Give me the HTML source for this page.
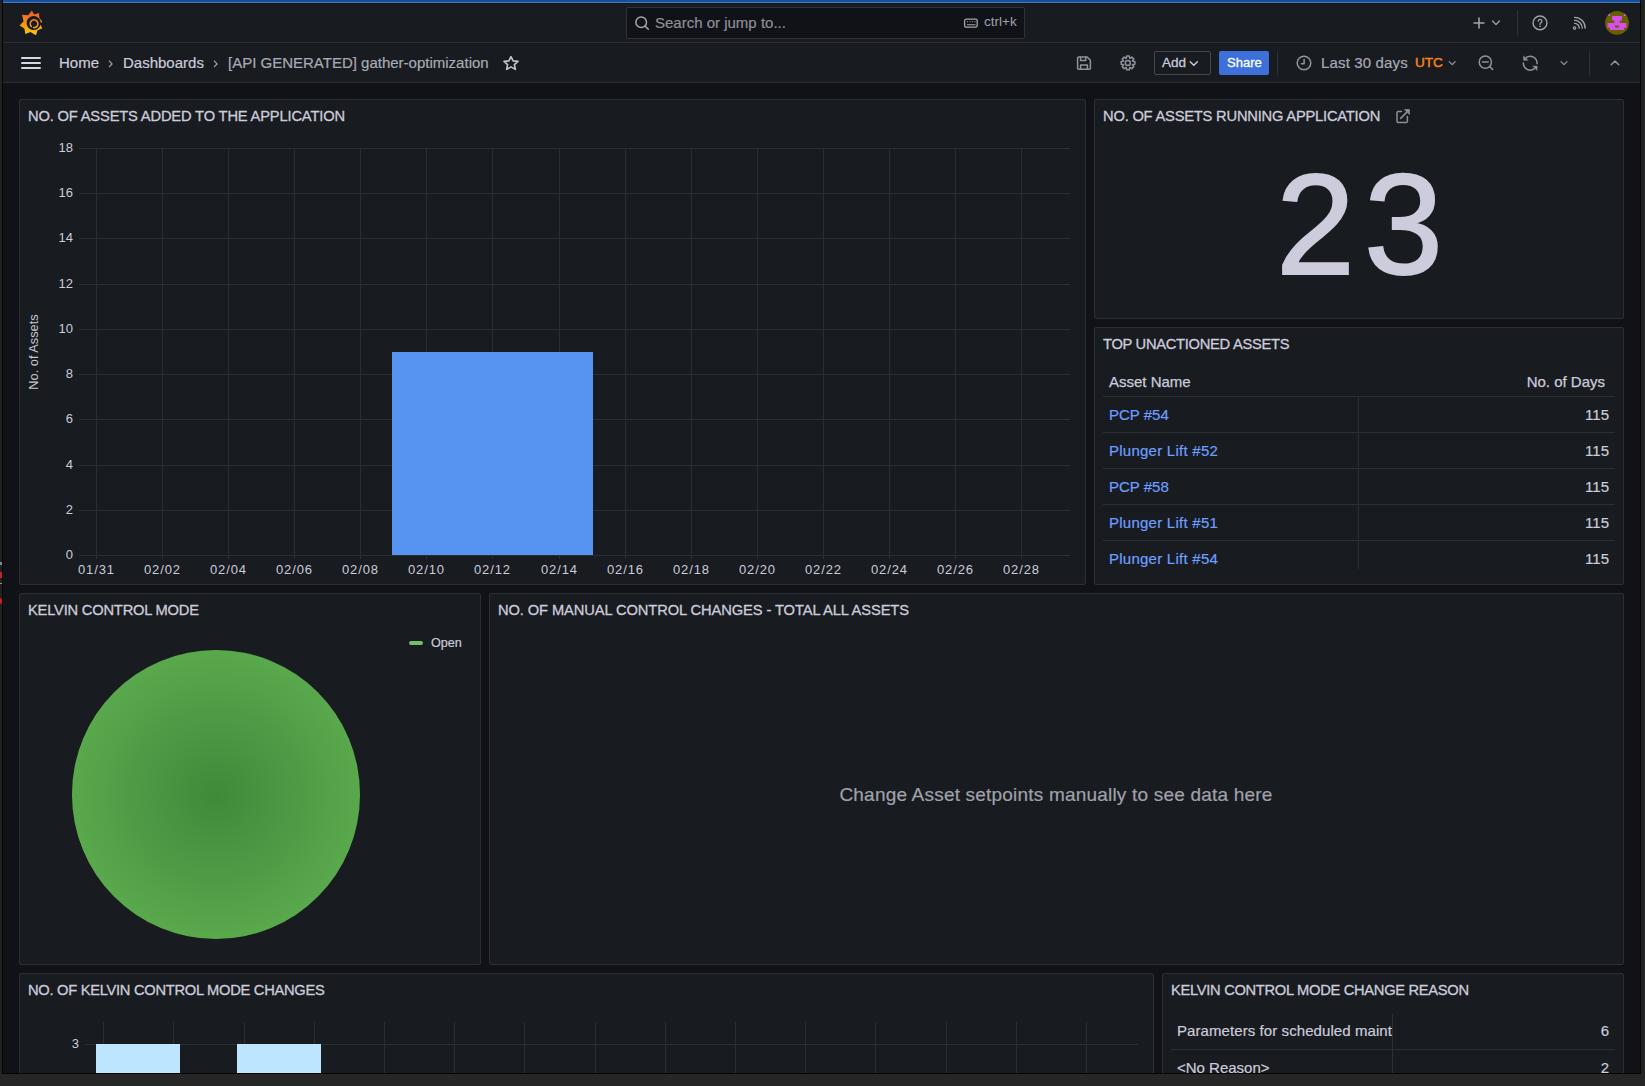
<!DOCTYPE html>
<html><head><meta charset="utf-8">
<style>
*{box-sizing:border-box;margin:0;padding:0}
html,body{width:1645px;height:1086px;overflow:hidden;background:#111217;font-family:"Liberation Sans",sans-serif;color:#ccccdc;position:relative}
.a{position:absolute}
.t{position:absolute;white-space:nowrap;line-height:1;-webkit-text-stroke-width:0.2px}
.panel{position:absolute;background:#181b1f;border:1px solid #2b2e34;border-radius:2px;overflow:hidden}
.pt{position:absolute;font-size:14.7px;letter-spacing:-0.12px;color:#ccccdc;white-space:nowrap;line-height:16px;-webkit-text-stroke:0.3px #ccccdc;margin-top:0.5px}
.gh{position:absolute;height:1px;background:#2a2d31}
.gv{position:absolute;width:1px;background:#2a2d31}
.yl{position:absolute;font-size:13px;color:#ccccdc;line-height:14px;text-align:right;width:40px}
.xl{position:absolute;font-size:13px;color:#ccccdc;line-height:14px;text-align:center;width:50px;letter-spacing:0.85px;text-indent:0.85px}
</style></head><body>
<!-- header -->
<div class="a" style="left:0;top:0;width:1645px;height:2px;background:#1450a0"></div>
<div class="a" style="left:0;top:2px;width:1645px;height:1px;background:#4a7ab8"></div>
<div class="a" style="left:0;top:3px;width:1645px;height:1px;background:#141414"></div>
<div class="a" style="left:0;top:4px;width:1645px;height:38px;background:#181b1f"></div>
<div class="a" style="left:0;top:42px;width:1645px;height:1px;background:#2b2e34"></div>
<div class="a" style="left:0;top:43px;width:1645px;height:39px;background:#181b1f"></div>
<div class="a" style="left:0;top:82px;width:1645px;height:1px;background:#2b2e34"></div>


<!-- LOGO -->
<svg class="a" style="left:0;top:0" width="60" height="45" viewBox="0 0 60 45">
 <defs><linearGradient id="lg" gradientUnits="userSpaceOnUse" x1="0" y1="11" x2="0" y2="35"><stop offset="0" stop-color="#f05a28"/><stop offset="1" stop-color="#fbca0a"/></linearGradient></defs>
 <polygon fill="url(#lg)" points="31.90,10.60 34.10,14.46 39.00,13.10 39.39,17.91 42.10,21.30 42.00,22.40 39.60,22.40 39.60,24.40 40.90,25.20 42.30,28.60 37.50,30.25 36.00,35.20 30.44,32.00 25.40,34.10 24.36,28.52 19.60,25.60 23.58,21.24 21.90,14.70 28.20,15.17"/>
 <path d="M40.6,22.2 A7,7 0 1 0 40.5,24.4" fill="#181b1f"/>
 <circle cx="33.8" cy="23.1" r="6.4" fill="#181b1f"/>
 <path d="M31.3,26.5 A3.9,3.9 0 1 1 33.6,27.6" fill="none" stroke="url(#lg)" stroke-width="1.5" stroke-linecap="round"/>
</svg>
<!-- SEARCH -->
<div class="a" style="left:626px;top:7px;width:399px;height:32px;background:#111217;border:1px solid #2f3136;border-radius:2px"></div>
<svg class="a" style="left:630px;top:12px" width="24" height="22" viewBox="0 0 24 22" fill="none" stroke="#a4a5af" stroke-width="1.5" stroke-linecap="round">
 <circle cx="11.2" cy="10.2" r="5.3"/><path d="M15.1,14.1 L18.3,17.3"/>
</svg>
<div class="t" style="left:655px;top:15px;font-size:15px;color:#8e8f9a;line-height:16px">Search or jump to...</div>
<svg class="a" style="left:960px;top:13px" width="22" height="20" viewBox="0 0 22 20" fill="none" stroke="#a4a5af" stroke-width="1.3">
 <rect x="4.6" y="6.2" width="12.6" height="8" rx="1.6"/>
 <path d="M7,8.7h1 M9.5,8.7h1 M12,8.7h1 M14.5,8.7h1 M7,11.7h8.5" stroke-width="1.1"/>
</svg>
<div class="t" style="left:984px;top:15px;font-size:13.5px;color:#9fa0aa;line-height:14px;-webkit-text-stroke-width:0">ctrl+k</div>
<!-- right icons -->
<svg class="a" style="left:1465px;top:8px" width="175" height="30" viewBox="1465 8 175 30" fill="none" stroke="#a2a3ad" stroke-width="1.6" stroke-linecap="round">
 <path d="M1474,23 H1484 M1479,18 V28"/>
 <path d="M1492.6,21 L1496,24.6 L1499.4,21" stroke-width="1.3"/>
 <path d="M1517.6,11 V35" stroke="#34363c" stroke-width="1"/>
 <circle cx="1540" cy="22.9" r="6.9" stroke-width="1.4"/>
 <path d="M1538.3,21.2 A1.8,1.8 0 1 1 1540.8,22.9 Q1540,23.3 1540,24.4" stroke-width="1.3"/>
 <circle cx="1540" cy="26.3" r="0.45" fill="#a2a3ad" stroke-width="0.7"/>
 <circle cx="1574.6" cy="28.1" r="1.2" stroke-width="1.2"/>
 <path d="M1574.6,23.4 A4.6,4.6 0 0 1 1579.2,28.2 M1574.6,20.4 A7.6,7.6 0 0 1 1582.2,28.2 M1574.6,17.4 A10.6,10.6 0 0 1 1585.2,28.2" stroke-width="1.3"/>
</svg>
<svg class="a" style="left:1604px;top:10px" width="26" height="26" viewBox="0 0 26 26">
 <defs><clipPath id="avc"><circle cx="13" cy="12.9" r="11.95"/></clipPath></defs>
 <circle cx="13" cy="12.9" r="11.95" fill="#676000"/>
 <g clip-path="url(#avc)" fill="#d84ee8">
  <rect x="3.8" y="3.5" width="2.2" height="2.5"/><rect x="20" y="3.5" width="2.2" height="2.5"/>
  <path d="M8.1,6 H17.9 V10.4 H15.7 V13 H22.4 V17.75 H20.1 V20.1 H6 V17.75 H3.5 V13 H10.4 V10.4 H8.1 Z"/>
 </g>
 <rect x="11" y="15.5" width="4" height="2.1" fill="#676000"/>
</svg>
<!-- TOOLBAR -->
<div class="a" style="left:21px;top:57px;width:20px;height:2px;background:#d6d6e4;border-radius:1px"></div>
<div class="a" style="left:21px;top:62px;width:20px;height:2px;background:#d6d6e4;border-radius:1px"></div>
<div class="a" style="left:21px;top:67px;width:20px;height:2px;background:#d6d6e4;border-radius:1px"></div>
<div class="t" style="left:59px;top:55px;font-size:15px;color:#ccccdc;line-height:16px">Home</div>
<svg class="a" style="left:104px;top:57.4px" width="14" height="14" viewBox="0 0 14 14" fill="none" stroke="#a4a5af" stroke-width="1.2"><path d="M5,3.6 L8,6.9 L5,10.2"/></svg>
<div class="t" style="left:123px;top:55px;font-size:15px;color:#ccccdc;line-height:16px">Dashboards</div>
<svg class="a" style="left:209px;top:57.4px" width="14" height="14" viewBox="0 0 14 14" fill="none" stroke="#a4a5af" stroke-width="1.2"><path d="M5,3.6 L8,6.9 L5,10.2"/></svg>
<div class="t" style="left:228px;top:55px;font-size:15px;color:#a9aab5;line-height:16px">[API GENERATED] gather-optimization</div>
<svg class="a" style="left:500px;top:52px" width="22" height="22" viewBox="0 0 22 22" fill="none" stroke="#c4c5cf" stroke-width="1.5" stroke-linejoin="round">
 <path d="M11,4.6 L13.1,8.9 L18,9.4 L14.4,12.6 L15.4,17.4 L11,14.9 L6.6,17.4 L7.6,12.6 L4,9.4 L8.9,8.9 Z" stroke-width="1.6"/>
</svg>
<!-- right toolbar -->
<svg class="a" style="left:1070px;top:50px" width="80" height="26" viewBox="1070 50 80 26" fill="none" stroke="#92939e" stroke-width="1.5" stroke-linejoin="round" stroke-linecap="round">
 <path d="M1078.6,57 H1087.2 L1090.4,60.2 V68.2 Q1090.4,69.2 1089.4,69.2 H1078.6 Q1077.6,69.2 1077.6,68.2 V58 Q1077.6,57 1078.6,57 Z"/>
 <path d="M1080.6,57.2 V60.6 H1085.8 V57.2 M1080.6,69 V65 H1087.4 V69"/>
 <circle cx="1127.8" cy="63" r="2.5"/>
 <path d="M1126.33,58.19 L1126.66,56.03 L1129.34,56.03 L1129.67,58.19 L1130.15,58.39 L1131.91,57.10 L1133.80,58.99 L1132.51,60.75 L1132.71,61.23 L1134.87,61.56 L1134.87,64.24 L1132.71,64.57 L1132.51,65.05 L1133.80,66.81 L1131.91,68.70 L1130.15,67.41 L1129.67,67.61 L1129.34,69.77 L1126.66,69.77 L1126.33,67.61 L1125.85,67.41 L1124.09,68.70 L1122.20,66.81 L1123.49,65.05 L1123.29,64.57 L1121.13,64.24 L1121.13,61.56 L1123.29,61.23 L1123.49,60.75 L1122.20,58.99 L1124.09,57.10 L1125.85,58.39 Z"/>
</svg>
<div class="a" style="left:1154px;top:51px;width:57px;height:24px;border:1px solid #45474d;border-radius:2px"></div>
<div class="t" style="left:1162px;top:56px;font-size:13.5px;color:#ccccdc;line-height:14px;-webkit-text-stroke:0.3px #ccccdc">Add</div>
<svg class="a" style="left:1186px;top:56px" width="14" height="14" viewBox="0 0 14 14" fill="none" stroke="#ccccdc" stroke-width="1.4" stroke-linecap="round"><path d="M4.2,5.8 L7.8,9.2 L11.4,5.8"/></svg>
<div class="a" style="left:1219px;top:51px;width:50px;height:24px;background:#3d71d9;border-radius:2px"></div>
<div class="t" style="left:1227px;top:56px;font-size:13px;color:#ffffff;line-height:14px;-webkit-text-stroke:0.3px #ffffff">Share</div>
<div class="a" style="left:1277px;top:51px;width:1px;height:24px;background:#2e3036"></div>
<svg class="a" style="left:1290px;top:50px" width="350" height="26" viewBox="1290 50 350 26" fill="none" stroke="#92939e" stroke-width="1.5" stroke-linecap="round" stroke-linejoin="round">
 <circle cx="1304" cy="63" r="6.8"/>
 <path d="M1304.1,59.4 V63.8 H1301.4"/>
 <path d="M1449.2,61.6 L1452.2,64.6 L1455.2,61.6" stroke-width="1.3"/>
 <circle cx="1485.3" cy="62.1" r="6.1"/>
 <path d="M1482.4,62.1 H1488.2 M1489.8,66.6 L1492.6,69.4"/>
 <path d="M1537,63.6 A6.8,6.8 0 0 0 1526.2,57.6 M1523.4,63 A6.8,6.8 0 0 0 1534.4,68.6"/>
 <path d="M1523.6,56.2 V60.3 H1527.7 Z M1537.1,70.2 V66.1 H1533 Z" fill="#92939e" stroke-width="0.5"/>
 <path d="M1561,61.6 L1564,64.6 L1567,61.6" stroke-width="1.3"/>
 <path d="M1589.5,51.5 V75" stroke="#2e3036" stroke-width="1"/>
 <path d="M1611.2,64.8 L1615,61 L1618.8,64.8" stroke-width="1.5"/>
</svg>
<div class="t" style="left:1321px;top:55px;font-size:15px;color:#a9aab5;line-height:16px;letter-spacing:0.15px">Last 30 days</div>
<div class="t" style="left:1415px;top:56px;font-size:13.6px;color:#f5821f;line-height:14px;-webkit-text-stroke:0.45px #f5821f">UTC</div>

<!-- PANELS -->
<div class="panel" style="left:19px;top:99px;width:1067px;height:486px"></div>
<div class="panel" style="left:1094px;top:99px;width:530px;height:220px"></div>
<div class="panel" style="left:1094px;top:327px;width:530px;height:258px"></div>
<div class="panel" style="left:19px;top:593px;width:462px;height:372px"></div>
<div class="panel" style="left:489px;top:593px;width:1135px;height:372px"></div>
<div class="panel" style="left:19px;top:973px;width:1135px;height:200px"></div>
<div class="panel" style="left:1162px;top:973px;width:462px;height:200px"></div>

<!-- titles -->
<div class="pt" style="left:28px;top:107px;letter-spacing:-0.16px">NO. OF ASSETS ADDED TO THE APPLICATION</div>
<div class="pt" style="left:1103px;top:107px;letter-spacing:-0.2px">NO. OF ASSETS RUNNING APPLICATION</div>
<div class="pt" style="left:1103px;top:335px;letter-spacing:-0.28px">TOP UNACTIONED ASSETS</div>
<div class="pt" style="left:28px;top:601px;letter-spacing:-0.2px">KELVIN CONTROL MODE</div>
<div class="pt" style="left:498px;top:601px;letter-spacing:-0.1px">NO. OF MANUAL CONTROL CHANGES - TOTAL ALL ASSETS</div>
<div class="pt" style="left:28px;top:981px;letter-spacing:-0.28px">NO. OF KELVIN CONTROL MODE CHANGES</div>
<div class="pt" style="left:1171px;top:981px;letter-spacing:-0.3px">KELVIN CONTROL MODE CHANGE REASON</div>

<!-- CHART1 -->
<div class="gh" style="left:79px;top:148px;width:991px"></div>
<div class="gh" style="left:79px;top:193px;width:991px"></div>
<div class="gh" style="left:79px;top:238px;width:991px"></div>
<div class="gh" style="left:79px;top:284px;width:991px"></div>
<div class="gh" style="left:79px;top:329px;width:991px"></div>
<div class="gh" style="left:79px;top:374px;width:991px"></div>
<div class="gh" style="left:79px;top:419px;width:991px"></div>
<div class="gh" style="left:79px;top:465px;width:991px"></div>
<div class="gh" style="left:79px;top:510px;width:991px"></div>
<div class="gh" style="left:79px;top:555px;width:991px"></div>
<div class="gv" style="left:96px;top:148px;height:411px"></div>
<div class="gv" style="left:162px;top:148px;height:411px"></div>
<div class="gv" style="left:228px;top:148px;height:411px"></div>
<div class="gv" style="left:294px;top:148px;height:411px"></div>
<div class="gv" style="left:360px;top:148px;height:411px"></div>
<div class="gv" style="left:426px;top:148px;height:411px"></div>
<div class="gv" style="left:492px;top:148px;height:411px"></div>
<div class="gv" style="left:559px;top:148px;height:411px"></div>
<div class="gv" style="left:625px;top:148px;height:411px"></div>
<div class="gv" style="left:691px;top:148px;height:411px"></div>
<div class="gv" style="left:757px;top:148px;height:411px"></div>
<div class="gv" style="left:823px;top:148px;height:411px"></div>
<div class="gv" style="left:889px;top:148px;height:411px"></div>
<div class="gv" style="left:955px;top:148px;height:411px"></div>
<div class="gv" style="left:1021px;top:148px;height:411px"></div>
<div class="yl" style="left:33px;top:141px">18</div>
<div class="yl" style="left:33px;top:186px">16</div>
<div class="yl" style="left:33px;top:231px">14</div>
<div class="yl" style="left:33px;top:277px">12</div>
<div class="yl" style="left:33px;top:322px">10</div>
<div class="yl" style="left:33px;top:367px">8</div>
<div class="yl" style="left:33px;top:412px">6</div>
<div class="yl" style="left:33px;top:458px">4</div>
<div class="yl" style="left:33px;top:503px">2</div>
<div class="yl" style="left:33px;top:548px">0</div>
<div class="xl" style="left:71px;top:563px">01/31</div>
<div class="xl" style="left:137px;top:563px">02/02</div>
<div class="xl" style="left:203px;top:563px">02/04</div>
<div class="xl" style="left:269px;top:563px">02/06</div>
<div class="xl" style="left:335px;top:563px">02/08</div>
<div class="xl" style="left:401px;top:563px">02/10</div>
<div class="xl" style="left:467px;top:563px">02/12</div>
<div class="xl" style="left:534px;top:563px">02/14</div>
<div class="xl" style="left:600px;top:563px">02/16</div>
<div class="xl" style="left:666px;top:563px">02/18</div>
<div class="xl" style="left:732px;top:563px">02/20</div>
<div class="xl" style="left:798px;top:563px">02/22</div>
<div class="xl" style="left:864px;top:563px">02/24</div>
<div class="xl" style="left:930px;top:563px">02/26</div>
<div class="xl" style="left:996px;top:563px">02/28</div>
<div class="a" style="left:392px;top:352px;width:201px;height:203px;background:#5794f2"></div>
<div class="a" style="left:33.5px;top:352px;font-size:12.8px;line-height:14px;white-space:nowrap;color:#c4c4d0;transform:translate(-50%,-50%) rotate(-90deg)">No. of Assets</div>
<!-- STAT -->
<svg class="a" style="left:1394px;top:107px" width="18" height="18" viewBox="0 0 18 18" fill="none" stroke="#8e8f9a" stroke-width="1.5" stroke-linecap="round" stroke-linejoin="round">
 <path d="M7.5,4.6 H4.2 Q3,4.6 3,5.8 V14.2 Q3,15.4 4.2,15.4 H12.2 Q13.4,15.4 13.4,14.2 V9.6"/>
 <path d="M6.6,11.4 L13.6,4.4"/>
 <path d="M10.8,2.6 H15.4 V7.2 Z" fill="#8e8f9a" stroke-width="0.8"/>
</svg>
<div class="t" style="left:1276px;top:154px;font-size:142px;line-height:142px;color:#ccccdc;-webkit-text-stroke:2px #ccccdc;letter-spacing:9px">23</div>
<!-- TABLE -->
<div class="t" style="left:1109px;top:374px;font-size:15px;line-height:16px;color:#ccccdc;-webkit-text-stroke:0.25px #ccccdc">Asset Name</div>
<div class="t" style="left:1605px;top:374px;font-size:15px;line-height:16px;color:#ccccdc;-webkit-text-stroke:0.25px #ccccdc;transform:translateX(-100%)">No. of Days</div>
<div class="gh" style="left:1103px;top:396px;width:512px;background:#2c2f34"></div>
<div class="gh" style="left:1103px;top:432px;width:512px;background:#2c2f34"></div>
<div class="gh" style="left:1103px;top:468px;width:512px;background:#2c2f34"></div>
<div class="gh" style="left:1103px;top:504px;width:512px;background:#2c2f34"></div>
<div class="gh" style="left:1103px;top:540px;width:512px;background:#2c2f34"></div>
<div class="gv" style="left:1358px;top:397px;height:172px;background:#2c2f34"></div>
<div class="t" style="left:1109px;top:406.5px;font-size:15px;line-height:16px;color:#6e9fff">PCP #54</div>
<div class="t" style="left:1609px;top:406.5px;font-size:15px;line-height:16px;color:#ccccdc;transform:translateX(-100%)">115</div>
<div class="t" style="left:1109px;top:442.5px;font-size:15px;line-height:16px;color:#6e9fff;letter-spacing:0.25px">Plunger Lift #52</div>
<div class="t" style="left:1609px;top:442.5px;font-size:15px;line-height:16px;color:#ccccdc;transform:translateX(-100%)">115</div>
<div class="t" style="left:1109px;top:478.5px;font-size:15px;line-height:16px;color:#6e9fff">PCP #58</div>
<div class="t" style="left:1609px;top:478.5px;font-size:15px;line-height:16px;color:#ccccdc;transform:translateX(-100%)">115</div>
<div class="t" style="left:1109px;top:514.5px;font-size:15px;line-height:16px;color:#6e9fff;letter-spacing:0.25px">Plunger Lift #51</div>
<div class="t" style="left:1609px;top:514.5px;font-size:15px;line-height:16px;color:#ccccdc;transform:translateX(-100%)">115</div>
<div class="t" style="left:1109px;top:550.5px;font-size:15px;line-height:16px;color:#6e9fff;letter-spacing:0.25px">Plunger Lift #54</div>
<div class="t" style="left:1609px;top:550.5px;font-size:15px;line-height:16px;color:#ccccdc;transform:translateX(-100%)">115</div>
<!-- PIE -->
<div class="a" style="left:409px;top:641px;width:14px;height:4px;border-radius:2px;background:#73bf69"></div>
<div class="t" style="left:431px;top:636px;font-size:12.6px;line-height:14px;color:#ccccdc">Open</div>
<div class="a" style="left:71.6px;top:650.4px;width:288.6px;height:288.6px;border-radius:50%;background:radial-gradient(circle closest-side, #3f8a39 0%, #4b9743 45%, #5aa84c 100%)"></div>
<!-- MANUAL -->
<div class="t" style="left:1056px;top:795px;transform:translate(-50%,-50%);font-size:19px;line-height:20px;color:#a0a1ab;letter-spacing:0.2px">Change Asset setpoints manually to see data here</div>
<!-- BOTTOM CHART -->
<div class="gh" style="left:85px;top:1044px;width:1053px"></div>
<div class="gv" style="left:103px;top:1022px;height:60px"></div>
<div class="gv" style="left:173px;top:1022px;height:60px"></div>
<div class="gv" style="left:244px;top:1022px;height:60px"></div>
<div class="gv" style="left:314px;top:1022px;height:60px"></div>
<div class="gv" style="left:384px;top:1022px;height:60px"></div>
<div class="gv" style="left:454px;top:1022px;height:60px"></div>
<div class="gv" style="left:524px;top:1022px;height:60px"></div>
<div class="gv" style="left:595px;top:1022px;height:60px"></div>
<div class="gv" style="left:665px;top:1022px;height:60px"></div>
<div class="gv" style="left:735px;top:1022px;height:60px"></div>
<div class="gv" style="left:805px;top:1022px;height:60px"></div>
<div class="gv" style="left:875px;top:1022px;height:60px"></div>
<div class="gv" style="left:946px;top:1022px;height:60px"></div>
<div class="gv" style="left:1016px;top:1022px;height:60px"></div>
<div class="gv" style="left:1086px;top:1022px;height:60px"></div>
<div class="yl" style="left:39px;top:1037px">3</div>
<div class="a" style="left:96px;top:1044px;width:84px;height:40px;background:#bde5fd"></div>
<div class="a" style="left:237px;top:1044px;width:84px;height:40px;background:#bde5fd"></div>
<!-- REASON -->
<div class="gv" style="left:1392px;top:1014px;height:70px;background:#2c2f34"></div>
<div class="gh" style="left:1171px;top:1049px;width:444px;background:#2c2f34"></div>
<div class="t" style="left:1177px;top:1023px;font-size:15px;line-height:16px;color:#ccccdc;width:215px;overflow:hidden;letter-spacing:0.08px">Parameters for scheduled maint</div>
<div class="t" style="left:1609px;top:1023px;font-size:15px;line-height:16px;color:#ccccdc;transform:translateX(-100%)">6</div>
<div class="t" style="left:1177px;top:1060px;font-size:15px;line-height:16px;color:#ccccdc">&lt;No Reason&gt;</div>
<div class="t" style="left:1609px;top:1060px;font-size:15px;line-height:16px;color:#ccccdc;transform:translateX(-100%)">2</div>

<!-- FRAME overlays -->
<div class="a" style="left:0;top:0;width:2px;height:1086px;background:#222222"></div>
<div class="a" style="left:0;top:562px;width:2px;height:3px;background:#8a8a8a"></div>
<div class="a" style="left:0;top:572px;width:2px;height:6px;background:#c8202a"></div>
<div class="a" style="left:0;top:583px;width:2px;height:1px;background:#9a9a9a"></div>
<div class="a" style="left:0;top:598px;width:2px;height:6px;background:#d01a24;border-radius:0 3px 3px 0"></div>
<div class="a" style="left:2px;top:0;width:1px;height:1074px;background:#050505"></div>
<div class="a" style="left:1640px;top:0;width:1px;height:1074px;background:#050505"></div>
<div class="a" style="left:1641px;top:0;width:4px;height:1086px;background:#222222"></div>
<div class="a" style="left:2px;top:1073px;width:1639px;height:1px;background:#050505"></div>
<div class="a" style="left:0;top:1074px;width:1645px;height:12px;background:#262626"></div>
</body></html>
